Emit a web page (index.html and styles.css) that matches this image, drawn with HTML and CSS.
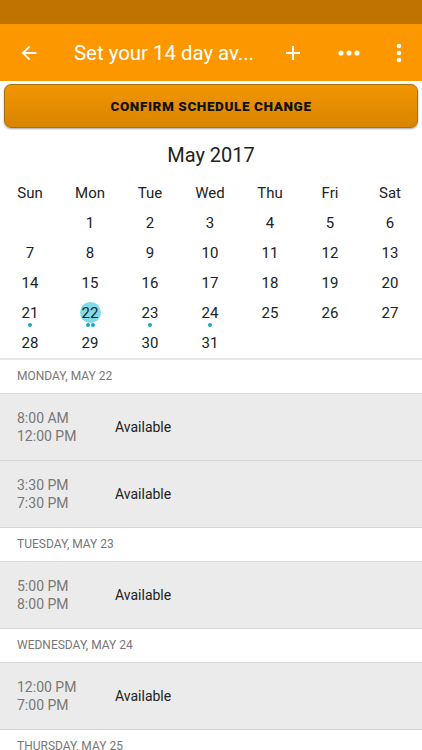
FILE: index.html
```html
<!DOCTYPE html>
<html lang="en">
<head>
    <meta charset="UTF-8">
    <meta name="viewport" content="width=device-width, initial-scale=1.0">
    <title>Set your 14 day availability</title>
    <link rel="stylesheet" href="styles.css">
</head>
<body>

    <div class="status-bar"></div>

    <header class="toolbar">
        <svg class="icon back" width="22" height="22" viewBox="0 0 24 24">
            <path d="M20 11H7.83l5.59-5.59L12 4l-8 8 8 8 1.41-1.41L7.83 13H20v-2z" fill="#fff"/>
        </svg>
        <h1 class="title">Set your 14 day av...</h1>
        <svg class="icon plus" width="24" height="24" viewBox="0 0 24 24">
            <path d="M19 13h-6v6h-2v-6H5v-2h6V5h2v6h6v2z" fill="#fff"/>
        </svg>
        <svg class="icon more" width="24" height="8" viewBox="0 0 24 8">
            <circle cx="4" cy="4" r="2.6" fill="#fff"/>
            <circle cx="12" cy="4" r="2.6" fill="#fff"/>
            <circle cx="20" cy="4" r="2.6" fill="#fff"/>
        </svg>
        <svg class="icon kebab" width="6" height="20" viewBox="0 0 6 20">
            <circle cx="3" cy="3" r="2.3" fill="#fff"/>
            <circle cx="3" cy="10" r="2.3" fill="#fff"/>
            <circle cx="3" cy="17" r="2.3" fill="#fff"/>
        </svg>
    </header>

    <main>
        <button type="button" class="confirm">Confirm Schedule Change</button>

        <section class="calendar">
            <h2 class="month">May 2017</h2>
            <div class="grid">
                <span class="dow">Sun</span><span class="dow">Mon</span><span class="dow">Tue</span><span class="dow">Wed</span><span class="dow">Thu</span><span class="dow">Fri</span><span class="dow">Sat</span>

                <span class="day"></span><span class="day">1</span><span class="day">2</span><span class="day">3</span><span class="day">4</span><span class="day">5</span><span class="day">6</span>
                <span class="day">7</span><span class="day">8</span><span class="day">9</span><span class="day">10</span><span class="day">11</span><span class="day">12</span><span class="day">13</span>
                <span class="day">14</span><span class="day">15</span><span class="day">16</span><span class="day">17</span><span class="day">18</span><span class="day">19</span><span class="day">20</span>
                <span class="day">21<i class="dots"><b></b></i></span>
                <span class="day selected">22<i class="dots"><b></b><b></b></i></span>
                <span class="day">23<i class="dots"><b></b></i></span>
                <span class="day">24<i class="dots"><b></b></i></span>
                <span class="day">25</span><span class="day">26</span><span class="day">27</span>
                <span class="day">28</span><span class="day">29</span><span class="day">30</span><span class="day">31</span>
            </div>
        </section>

        <div class="agenda">
            <div class="date-head">MONDAY, MAY 22</div>
            <div class="slot">
                <div class="time">8:00 AM<br>12:00 PM</div>
                <div class="state">Available</div>
            </div>
            <div class="slot">
                <div class="time">3:30 PM<br>7:30 PM</div>
                <div class="state">Available</div>
            </div>

            <div class="date-head">TUESDAY, MAY 23</div>
            <div class="slot">
                <div class="time">5:00 PM<br>8:00 PM</div>
                <div class="state">Available</div>
            </div>

            <div class="date-head">WEDNESDAY, MAY 24</div>
            <div class="slot">
                <div class="time">12:00 PM<br>7:00 PM</div>
                <div class="state">Available</div>
            </div>

            <div class="date-head">THURSDAY, MAY 25</div>
        </div>
    </main>

</body>
</html>
```

FILE: styles.css
```css
body {
    font-family: Roboto, "Noto Sans", sans-serif;
    background-color: white;
    color: #222;
    margin: 0;
    padding: 0;
    height: 750px;
    overflow: hidden;
}
.status-bar {
    height: 24px;
    background-color: #c17300;
}
.toolbar {
    height: 57px;
    background-color: #fd9700;
    display: flex;
    align-items: center;
    color: white;
}
.toolbar .back {
    margin-left: 18px;
}
.title {
    font-size: 20.4px;
    font-weight: normal;
    margin: 0 0 0 34px;
    flex: 1;
    white-space: nowrap;
}
.toolbar .plus {
    margin-right: 32px;
}
.toolbar .more {
    margin-right: 35px;
}
.toolbar .kebab {
    margin-right: 20px;
}
main {
    padding-top: 3px;
}
.confirm {
    display: block;
    width: 414px;
    height: 44px;
    margin: 0 4px;
    background: linear-gradient(#f29600, #d98500);
    border: 1px solid #a8700e;
    border-radius: 7px;
    box-shadow: 0 1px 2px rgba(0,0,0,0.35);
    font-family: Roboto, sans-serif;
    font-weight: 900;
    font-size: 13.5px;
    letter-spacing: 0.6px;
    text-transform: uppercase;
    color: #111;
    cursor: pointer;
}
.calendar {
    border-bottom: 2px solid #e6e6e6;
}
.month {
    font-size: 20px;
    font-weight: normal;
    text-align: center;
    margin: 15px 0 0 0;
    color: #222;
    line-height: 24px;
}
.grid {
    display: grid;
    grid-template-columns: repeat(7, 60px);
    grid-auto-rows: 30px;
    margin-top: 11px;
    width: 420px;
}
.dow, .day {
    text-align: center;
    font-size: 15px;
    line-height: 30px;
    color: #222;
    position: relative;
}
.day.selected::before {
    content: "";
    position: absolute;
    left: 20px;
    top: 4px;
    width: 21px;
    height: 21px;
    border-radius: 50%;
    background-color: #80dbe8;
    z-index: -1;
}
.dots {
    position: absolute;
    left: 0;
    right: 0;
    top: 25px;
    display: flex;
    justify-content: center;
    gap: 1px;
}
.dots b {
    width: 4px;
    height: 4px;
    border-radius: 50%;
    background-color: #17a9c4;
}
.date-head {
    height: 33px;
    line-height: 33px;
    padding-left: 17px;
    font-size: 12px;
    color: #777;
    border-bottom: 1px solid #dadada;
}
.slot {
    height: 66px;
    background-color: #ebebeb;
    border-bottom: 1px solid #d6d6d6;
    display: flex;
    align-items: center;
    padding-left: 17px;
}
.time {
    width: 98px;
    font-size: 14px;
    line-height: 18px;
    color: #777;
}
.state {
    font-size: 14px;
    color: #222;
}
```
